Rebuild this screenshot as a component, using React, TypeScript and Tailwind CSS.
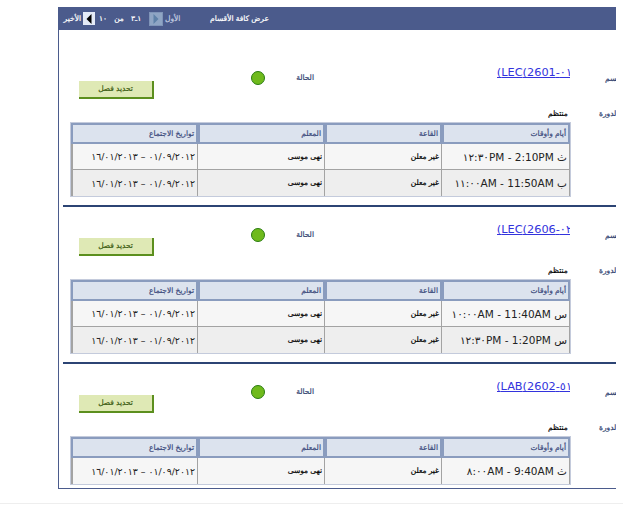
import { Fragment } from "react";

const dates = "٠١/٠٩/٢٠١٢ – ١٦/٠١/٢٠١٣";

// the Arabic labels are small and narrow, DejaVu Bold runs too wide
const arabic = "text-[7.5px] font-normal [-webkit-text-stroke:0.2px]";

const sections = [
  {
    link: "٠١-2601)LEC)",
    rows: [
      { day: "ث", from: "2:10PM", to: "١٢:٣٠PM" },
      { day: "ب", from: "11:50AM", to: "١١:٠٠AM" },
    ],
  },
  {
    link: "٠٢-2606)LEC)",
    rows: [
      { day: "س", from: "11:40AM", to: "١٠:٠٠AM" },
      { day: "س", from: "1:20PM", to: "١٢:٣٠PM" },
    ],
  },
  {
    link: "٥١-2602)LAB)",
    rows: [{ day: "ث", from: "9:40AM", to: "٨:٠٠AM" }],
  },
];

function ArrowButton({ dir, disabled }: { dir: "left" | "right"; disabled?: boolean }) {
  return (
    <span
      className={
        disabled
          ? "flex h-[14px] w-[14px] items-center justify-center border border-[#7f94b8] bg-[#8fa5c4]"
          : "flex h-[13px] w-[12px] items-center justify-center bg-[#e4eaf6]"
      }
    >
      <svg width="6" height="10" viewBox="0 0 6 10">
        <path
          d={dir === "left" ? "M5.5 0L0.5 5L5.5 10Z" : "M0.5 0L5.5 5L0.5 10Z"}
          fill={disabled ? "#5f81a8" : "#000000"}
        />
      </svg>
    </span>
  );
}

function Section({ link, rows, last }: (typeof sections)[number] & { last?: boolean }) {
  return (
    <div className={last ? "pt-[16px] pb-[3px]" : "pt-[16px] pb-[8px]"}>
      <div className="flex h-[39px] items-start">
        <button className={`${arabic} mt-[15px] ml-[20px] h-[18px] w-[75px] shrink-0 border-r-2 border-b-2 border-[#5c8f1e] bg-[#dfe9b5] leading-[16px] text-[#3c5c12]`}>
          تحديد فصل
        </button>
        <span className="mt-[5px] ml-[97px] h-[14px] w-[14px] shrink-0 rounded-full border border-[#2b7d12] bg-[#6fba1c]" />
        <span className={`${arabic} mt-[6px] w-[49px] shrink-0 text-right leading-[12px] text-[#2f3f70]`}>
          الحالة
        </span>
        <div className="ml-[183px] w-[73px] shrink-0 overflow-hidden">
          <a
            dir="rtl"
            href="#"
            className="block w-[75px] text-[11.3px] leading-[13px] whitespace-nowrap text-[#3333dd] underline"
            style={{ fontFamily: "'DejaVu Sans', sans-serif" }}
          >
            {link}
          </a>
        </div>
        <span className={`${arabic} mt-[7px] ml-[35px] leading-[12px] whitespace-nowrap text-[#2f3f70]`}>
          القسم
        </span>
      </div>
      <div className="flex h-[17px] items-start pt-[3px]">
        <span className={`${arabic} ml-[489px] w-[18px] shrink-0 text-right leading-[12px] whitespace-nowrap text-black`}>
          منتظم
        </span>
        <span className={`${arabic} ml-[33px] leading-[12px] whitespace-nowrap text-[#2f3f70]`}>
          الدورة
        </span>
      </div>
      <table className="ml-[11px] w-[499px] table-fixed border-separate border-spacing-0 border border-[#c4cbdc]">
        <colgroup>
          <col className="w-[127px]" />
          <col className="w-[127px]" />
          <col className="w-[117px]" />
          <col className="w-[128px]" />
        </colgroup>
        <thead>
          <tr className="h-[21px]">
            {["تواريخ الاجتماع", "المعلم", "القاعة", "أيام وأوقات"].map((h) => (
              <th
                key={h}
                className={`${arabic} border-2 border-[#8a9cbe] bg-[#dce3ee] px-[2px] text-right text-[#3b4a7c]`}
              >
                {h}
              </th>
            ))}
          </tr>
        </thead>
        <tbody>
          {rows.map((r, i) => {
            const bottom = i < rows.length - 1 ? "border-b" : "";
            return (
              <tr key={i} className={i % 2 === 0 ? "h-[26px] bg-[#f6f6f6]" : "h-[26px] bg-[#eeeeee]"}>
                <td className={`${bottom} border-r border-l-2 border-[#a3a3a3] px-[2px] pt-[2px] text-right text-[9.4px] text-[#222222]`} style={{ fontFamily: "'DejaVu Sans', sans-serif" }}>
                  {dates}
                </td>
                <td className={`${bottom} ${arabic} border-r border-[#a3a3a3] px-[2px] text-right text-black`}>
                  نهى موسى
                </td>
                <td className={`${bottom} ${arabic} border-r border-[#a3a3a3] px-[2px] text-right text-black`}>
                  غير معلن
                </td>
                <td className={`${bottom} border-r border-[#a3a3a3] px-[2px] pt-[2px] text-right text-[10.5px] text-[#222222]`} style={{ fontFamily: "'DejaVu Sans', sans-serif" }}>
                  <span dir="rtl">
                    {r.day} {r.from} - {r.to}
                  </span>
                </td>
              </tr>
            );
          })}
        </tbody>
      </table>
    </div>
  );
}

export default function App() {
  return (
    <div
      className="h-[505px] w-[623px] overflow-hidden bg-white pt-[7px]"
      style={{ fontFamily: "'Liberation Sans', 'DejaVu Sans', sans-serif" }}
    >
      <div className="ml-[58px] w-[558px] overflow-hidden border-b border-l border-[#4b5b8c]">
        <div className={`${arabic} flex h-[23px] items-center bg-[#4b5b8c] text-white`}>
          <span className="ml-[3px] w-[19px] shrink-0 text-right">الأخير</span>
          <span className="ml-[2px]">
            <ArrowButton dir="left" />
          </span>
          <span className="ml-[4px] w-[45px] shrink-0 text-left [word-spacing:5px]" dir="rtl">
            ١ـ٣ من ١٠
          </span>
          <span className="ml-[5px]">
            <ArrowButton dir="right" disabled />
          </span>
          <span className="ml-[2px] w-[18px] shrink-0 text-[#c5cfe2]">الأول</span>
          <span className="ml-[27px]">عرض كافة الأقسام</span>
        </div>
        <div className="pt-[20px]">
          {sections.map((s, i) => (
            <Fragment key={s.link}>
              <Section {...s} last={i === sections.length - 1} />
              {i < sections.length - 1 && <div className="ml-[4px] h-[2px] bg-[#2c4474]" />}
            </Fragment>
          ))}
        </div>
      </div>
      <div className="mt-[14px] h-px bg-[#eeeeee]" />
    </div>
  );
}
